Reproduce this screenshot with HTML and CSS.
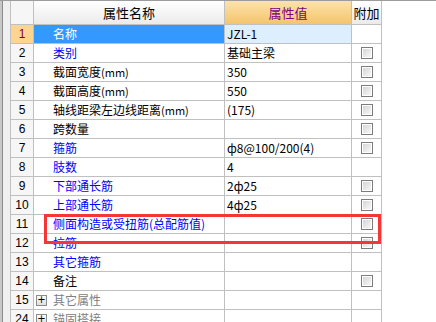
FILE: index.html
```html
<!DOCTYPE html>
<html lang="zh-CN">

<head>
    <meta charset="UTF-8">
    <title>属性编辑器</title>
    <link rel="stylesheet" href="styles.css">
</head>

<body>
    <div class="panel">
        <div class="edge"></div>
        <div class="gutter"></div>
        <div class="grid">
            <div class="cell head num"></div>
            <div class="cell head center">属性名称</div>
            <div class="cell head value-head center">属性值</div>
            <div class="cell head center">附加</div>

            <div class="cell num cur">1</div>
            <div class="cell name sel">名称</div>
            <div class="cell val selval">JZL-1</div>
            <div class="cell chk"></div>

            <div class="cell num">2</div>
            <div class="cell name blue">类别</div>
            <div class="cell val">基础主梁</div>
            <div class="cell chk"><span class="box"></span></div>

            <div class="cell num">3</div>
            <div class="cell name">截面宽度<span class="unit">(mm)</span></div>
            <div class="cell val">350</div>
            <div class="cell chk"><span class="box"></span></div>

            <div class="cell num">4</div>
            <div class="cell name">截面高度<span class="unit">(mm)</span></div>
            <div class="cell val">550</div>
            <div class="cell chk"><span class="box"></span></div>

            <div class="cell num">5</div>
            <div class="cell name">轴线距梁左边线距离<span class="unit">(mm)</span></div>
            <div class="cell val">(175)</div>
            <div class="cell chk"><span class="box"></span></div>

            <div class="cell num">6</div>
            <div class="cell name">跨数量</div>
            <div class="cell val"></div>
            <div class="cell chk"><span class="box"></span></div>

            <div class="cell num">7</div>
            <div class="cell name blue">箍筋</div>
            <div class="cell val">ф8@100/200(4)</div>
            <div class="cell chk"><span class="box"></span></div>

            <div class="cell num">8</div>
            <div class="cell name blue">肢数</div>
            <div class="cell val">4</div>
            <div class="cell chk"></div>

            <div class="cell num">9</div>
            <div class="cell name blue">下部通长筋</div>
            <div class="cell val">2ф25</div>
            <div class="cell chk"><span class="box"></span></div>

            <div class="cell num">10</div>
            <div class="cell name blue">上部通长筋</div>
            <div class="cell val">4ф25</div>
            <div class="cell chk"><span class="box"></span></div>

            <div class="cell num">11</div>
            <div class="cell name blue">侧面构造或受扭筋(总配筋值)</div>
            <div class="cell val"></div>
            <div class="cell chk"><span class="box"></span></div>

            <div class="cell num">12</div>
            <div class="cell name blue">拉筋</div>
            <div class="cell val"></div>
            <div class="cell chk"><span class="box"></span></div>

            <div class="cell num">13</div>
            <div class="cell name blue">其它箍筋</div>
            <div class="cell val"></div>
            <div class="cell chk"></div>

            <div class="cell num">14</div>
            <div class="cell name">备注</div>
            <div class="cell val"></div>
            <div class="cell chk"><span class="box"></span></div>

            <div class="cell num">15</div>
            <div class="cell name group"><span class="plus">+</span>其它属性</div>
            <div class="cell val"></div>
            <div class="cell chk"></div>

            <div class="cell num">24</div>
            <div class="cell name group"><span class="plus">+</span>锚固搭接</div>
            <div class="cell val"></div>
            <div class="cell chk"></div>
        </div>
        <div class="mark"></div>
    </div>
</body>

</html>
```

FILE: styles.css
```css
body {
    margin: 0;
    background: #fff;
    font-family: "Noto Sans CJK SC", "Liberation Sans", sans-serif;
    font-size: 12px;
    color: #000;
}

.panel {
    position: relative;
    display: flex;
    height: 322px;
    overflow: hidden;
    border-top: 1px solid #9c9c9c;
    box-sizing: border-box;
}

.edge {
    width: 2px;
    background: #c8c8c8;
    border-right: 1px solid #8c8c8c;
}

.gutter {
    width: 7px;
    background: #f0f0f0;
}

.grid {
    display: grid;
    grid-template-columns: 22px 190px 126px 29px;
    grid-template-rows: 23px;
    grid-auto-rows: 18px;
    gap: 1px;
    padding: 0 1px 1px 1px;
    background: #c0c0c0;
    align-self: flex-start;
}

.cell {
    background: #fff;
    display: flex;
    align-items: center;
    white-space: nowrap;
    overflow: hidden;
    line-height: 1;
}

.head {
    background: linear-gradient(#ffffff, #ebebeb);
    font-size: 13px;
}

.value-head {
    background: linear-gradient(#fbe3ad, #f4c46c);
    color: #800080;
}

.center {
    justify-content: center;
}

.num {
    justify-content: center;
    background: #f6f6f6;
    font-family: "Liberation Sans", sans-serif;
}

.num.cur {
    background: #fdd491;
    color: #80003c;
}

.name {
    padding-left: 19px;
}

.sel {
    background: #3399ff;
    color: #fff;
}

.selval {
    background: #ddeeff;
}

.blue {
    color: #0000ff;
}

.group {
    padding-left: 2px;
    color: #808080;
}

.unit {
    font-size: 11px;
}

.val {
    padding-left: 2px;
}

.chk {
    justify-content: center;
}

.box {
    width: 10px;
    height: 10px;
    border: 1px solid #7c7c7c;
    box-shadow: inset 0 0 0 1px #fff;
    background: linear-gradient(135deg, #d2d2d2, #fbfbfb);
}

.plus {
    width: 9px;
    height: 9px;
    margin-right: 6px;
    border: 1px solid #8c8c8c;
    background: linear-gradient(#fafafa, #e0e0e0);
    color: #000;
    font-family: "DejaVu Sans", sans-serif;
    font-size: 10px;
    display: flex;
    align-items: center;
    justify-content: center;
}

.mark {
    position: absolute;
    left: 44px;
    top: 213px;
    width: 331px;
    height: 24px;
    border: 3px solid #f53636;
}
```
